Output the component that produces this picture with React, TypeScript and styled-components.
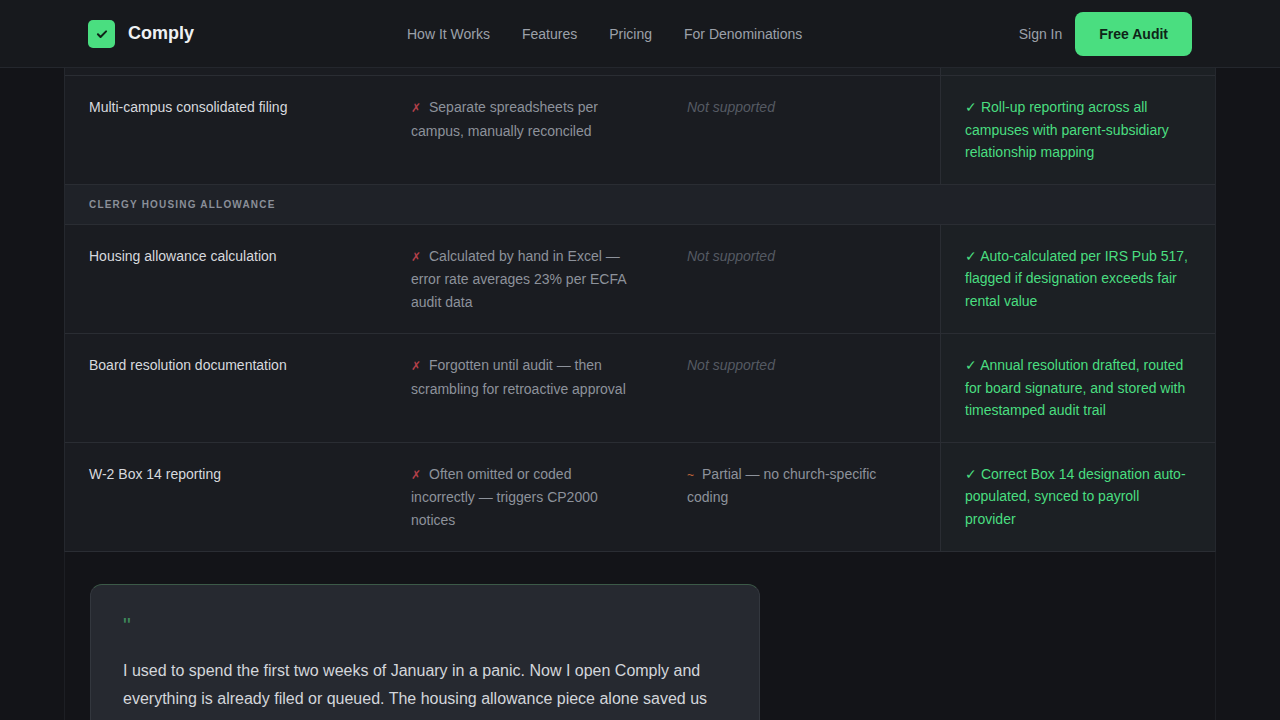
import { createGlobalStyle } from 'styled-components'
import styled from 'styled-components'

const Global = createGlobalStyle`
	body {
		margin: 0;
		background: #131418;
		font-family: 'Liberation Sans', Arial, sans-serif;
		color: #d7d9de;
	}
`

const Header = styled.header`
	height: 68px;
	box-sizing: border-box;
	background: #17191d;
	border-bottom: 1px solid #24272d;
	display: flex;
	align-items: center;
	padding: 0 88px;
`
const Brand = styled.div`
	display: flex;
	align-items: center;
	gap: 13px;
	font-size: 18px;
	font-weight: 700;
	color: #eef0f3;
	width: 319px;
`
const LogoBox = styled.div`
	width: 27px;
	height: 28px;
	border-radius: 5px;
	background: #4ade80;
	display: flex;
	align-items: center;
	justify-content: center;
`
const Nav = styled.nav`
	display: flex;
	gap: 32px;
	font-size: 14px;
	color: #9ca1aa;
`
const Right = styled.div`
	margin-left: auto;
	display: flex;
	align-items: center;
	gap: 13px;
	font-size: 14px;
	color: #9ca1aa;
`
const Cta = styled.button`
	background: #4ade80;
	color: #0f2418;
	border: 0;
	border-radius: 8px;
	height: 44px;
	padding: 0 24px;
	font: 700 14px 'Liberation Sans', Arial, sans-serif;
`
const Table = styled.div`
	margin: 0 64px;
	background: #1a1c21;
	border-left: 1px solid #25282e;
	border-right: 1px solid #25282e;
`
const Sliver = styled.div`
	display: grid;
	grid-template-columns: 322px 276px 277px 1fr;
	height: 7px;
	border-bottom: 1px solid #2a2d33;
`
const Row = styled.div`
	display: grid;
	grid-template-columns: 322px 276px 277px 1fr;
	border-bottom: 1px solid #2a2d33;
	font-size: 14px;
	line-height: 22.5px;
`
const Cell = styled.div<{ $tone?: 'feat' | 'bad' | 'na' | 'good' }>`
	padding: 20px ${p => (p.$tone === 'good' ? '24px' : '36px')} 20px 24px;
	min-height: 107px;
	box-sizing: border-box;
	color: ${p =>
		p.$tone === 'bad' ? '#8d929b' : p.$tone === 'na' ? '#555a63' : p.$tone === 'good' ? '#4ade80' : '#d7d9de'};
	font-style: ${p => (p.$tone === 'na' ? 'italic' : 'normal')};
	${p => p.$tone === 'good' && 'background: #1c2024; border-left: 1px solid #2a2d33; padding-left: 24px;'}
`
const GoodSliver = styled.div`
	grid-column: 4;
	background: #1c2024;
	border-left: 1px solid #2a2d33;
`
const Mark = styled.span<{ $c: string }>`
	color: ${p => p.$c};
	font-size: 12px;
	margin-right: 8px;
`
const Section = styled.div`
	background: #1f2228;
	height: 39px;
	display: flex;
	align-items: center;
	padding: 0 24px;
	font-size: 10px;
	font-weight: 700;
	letter-spacing: 1.2px;
	color: #8a8f98;
	border-bottom: 1px solid #2a2d33;
`
const Below = styled.div`
	padding: 32px 25px;
	margin: 0 64px;
	background: #131418;
	border-left: 1px solid #1d1f24;
	border-right: 1px solid #1d1f24;
	height: 200px;
`
const Quote = styled.div`
	width: 670px;
	box-sizing: border-box;
	background: #262930;
	border: 1px solid #33373e;
	border-top-color: #3c5a48;
	border-radius: 12px;
	padding: 28px 32px;
`
const QMark = styled.div`
	color: #3f8a5c;
	font-size: 22px;
	height: 36px;
`
const QText = styled.p`
	margin: 8px 0 0;
	font-size: 16px;
	line-height: 28px;
	color: #d3d6db;
`

type R = { f: string; bad: string; mid: string; midTone: 'na' | 'bad'; good: string }
const rows: R[] = [
	{ f: 'Housing allowance calculation', bad: 'Calculated by hand in Excel — error rate averages 23% per ECFA audit data', mid: 'Not supported', midTone: 'na', good: 'Auto-calculated per IRS Pub 517, flagged if designation exceeds fair rental value' },
	{ f: 'Board resolution documentation', bad: 'Forgotten until audit — then scrambling for retroactive approval', mid: 'Not supported', midTone: 'na', good: 'Annual resolution drafted, routed for board signature, and stored with timestamped audit trail' },
	{ f: 'W-2 Box 14 reporting', bad: 'Often omitted or coded incorrectly — triggers CP2000 notices', mid: 'Partial — no church-specific coding', midTone: 'bad', good: 'Correct Box 14 designation auto-populated, synced to payroll provider' },
]

function TableRow({ r }: { r: R }) {
	return (
		<Row>
			<Cell $tone="feat">{r.f}</Cell>
			<Cell $tone="bad"><Mark $c="#b4404a">✗</Mark>{r.bad}</Cell>
			<Cell $tone={r.midTone}>
				{r.midTone === 'bad' && <Mark $c="#c0663a">~</Mark>}
				{r.mid}
			</Cell>
			<Cell $tone="good">✓ {r.good}</Cell>
		</Row>
	)
}

export default function App() {
	return (
		<>
			<Global />
			<Header>
				<Brand>
					<LogoBox>
						<svg width="14" height="14" viewBox="0 0 24 24" fill="none" stroke="#0f2418" strokeWidth="3.5" strokeLinecap="round" strokeLinejoin="round">
							<path d="M5 12.5l4.5 4.5L19 7.5" />
						</svg>
					</LogoBox>
					Comply
				</Brand>
				<Nav>
					<span>How It Works</span>
					<span>Features</span>
					<span>Pricing</span>
					<span>For Denominations</span>
				</Nav>
				<Right>
					<span>Sign In</span>
					<Cta>Free Audit</Cta>
				</Right>
			</Header>
			<Table>
				<Sliver><GoodSliver /></Sliver>
				<TableRow r={{ f: 'Multi-campus consolidated filing', bad: 'Separate spreadsheets per campus, manually reconciled', mid: 'Not supported', midTone: 'na', good: 'Roll-up reporting across all campuses with parent-subsidiary relationship mapping' }} />
				<Section>CLERGY HOUSING ALLOWANCE</Section>
				{rows.map(r => <TableRow key={r.f} r={r} />)}
			</Table>
			<Below>
				<Quote>
					<QMark>"</QMark>
					<QText>
						I used to spend the first two weeks of January in a panic. Now I open Comply and everything is already filed or queued. The housing allowance piece alone saved us from an IRS notice that would have cost $40,000 to resolve.
					</QText>
				</Quote>
			</Below>
		</>
	)
}
